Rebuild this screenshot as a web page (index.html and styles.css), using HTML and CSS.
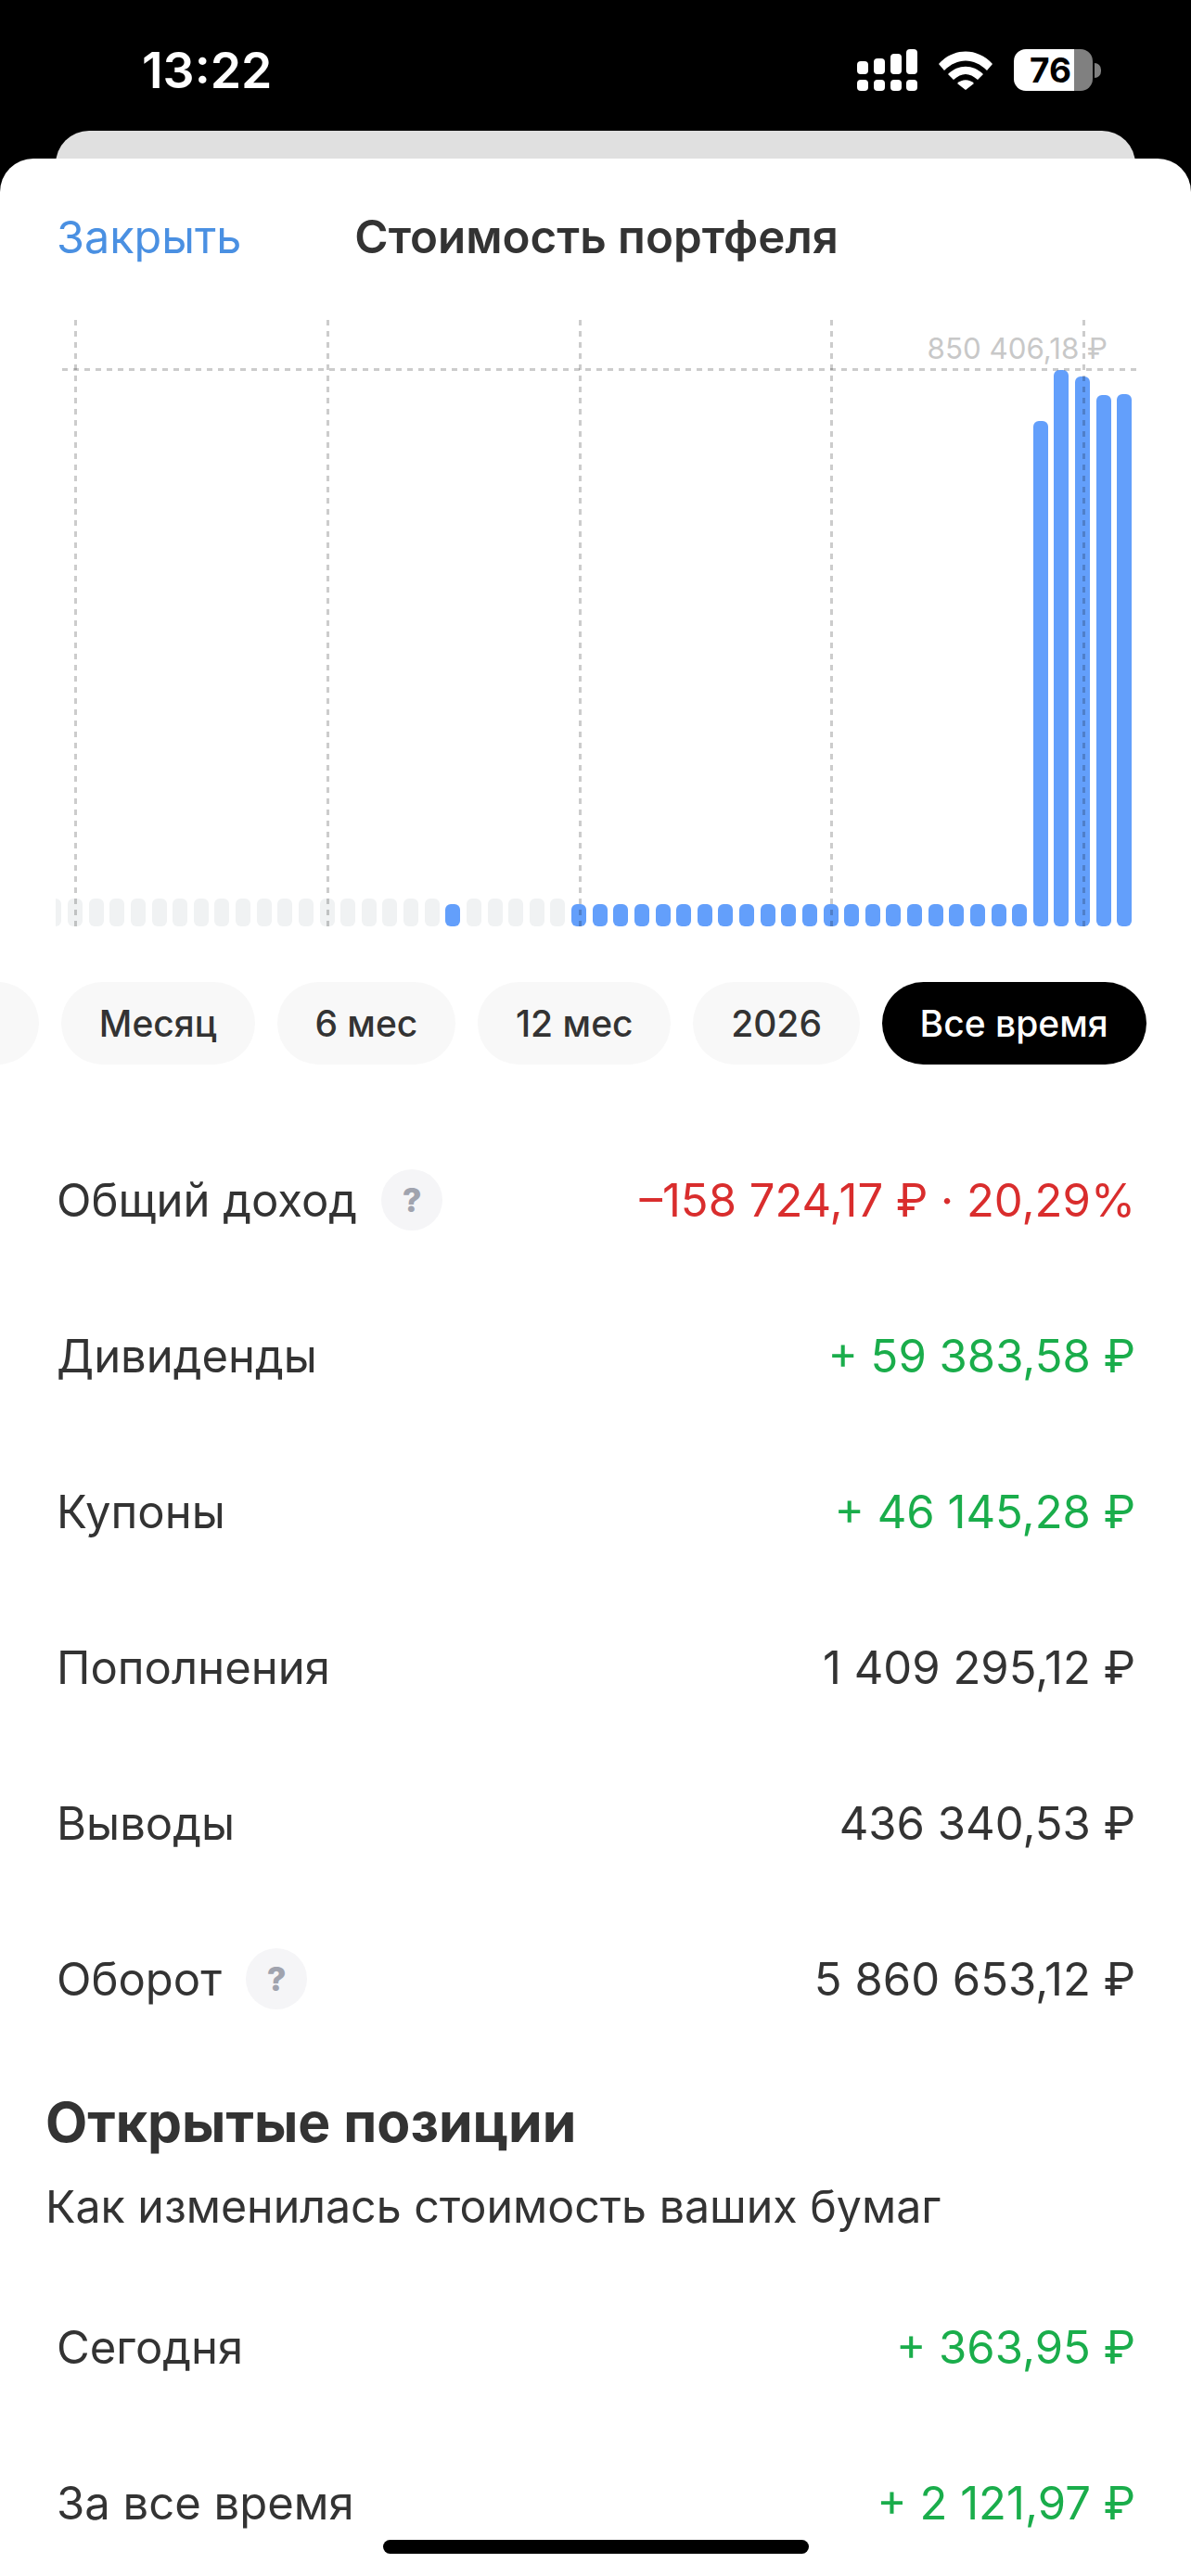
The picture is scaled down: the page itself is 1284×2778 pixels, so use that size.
FILE: index.html
```html
<!DOCTYPE html>
<html lang="ru">
<head>
    <meta charset="UTF-8">
    <title>Стоимость портфеля</title>
    <link rel="stylesheet" href="styles.css">
</head>
<body>
    <div class="status-bar">
        <span class="time">13:22</span>
        <div class="status-icons">
            <svg class="signal" width="65" height="45" viewBox="0 0 65 45" fill="#fff">
                <rect x="0" y="13" width="12" height="14" rx="4"/>
                <rect x="18" y="10" width="12" height="17" rx="4"/>
                <rect x="36" y="5" width="12" height="22" rx="4"/>
                <rect x="53" y="0" width="12" height="27" rx="4"/>
                <rect x="0" y="33" width="12" height="12" rx="4"/>
                <rect x="18" y="33" width="12" height="12" rx="4"/>
                <rect x="36" y="33" width="12" height="12" rx="4"/>
                <rect x="53" y="33" width="12" height="12" rx="4"/>
            </svg>
            <svg class="wifi" width="58" height="42" viewBox="0 0 58 42" fill="#fff">
                <path d="M0 14 C16 -4 42 -4 58 14 L52 21 C38 7 20 7 6 21 Z"/>
                <path d="M10 25 C21 14 37 14 48 25 L42 31 C33 23 25 23 16 31 Z"/>
                <path d="M20 35 C25 30 33 30 38 35 L29 42 Z"/>
            </svg>
            <div class="battery">
                <div class="battery-body"><span>76</span></div>
                <div class="battery-nub"></div>
            </div>
        </div>
    </div>

    <div class="back-card"></div>

    <main class="sheet">
        <header class="sheet-header">
            <a class="close-link">Закрыть</a>
            <h1 class="sheet-title">Стоимость портфеля</h1>
        </header>

        <section class="chart">
            <div class="bars" id="bars"></div>
            <div class="grid-lines">
                <div class="grid-v"></div>
                <div class="grid-v"></div>
                <div class="grid-v"></div>
                <div class="grid-v"></div>
                <div class="grid-v"></div>
            </div>
            <div class="grid-h"></div>
            <span class="max-label">850 406,18 ₽</span>
        </section>

        <nav class="periods">
            <span class="pill pill-cut"></span>
            <span class="pill">Месяц</span>
            <span class="pill">6 мес</span>
            <span class="pill">12 мес</span>
            <span class="pill">2026</span>
            <span class="pill pill-active">Все время</span>
        </nav>

        <section class="rows">
            <div class="row">
                <span class="row-label">Общий доход <i class="help">?</i></span>
                <span class="row-value red">–158 724,17 ₽ · 20,29%</span>
            </div>
            <div class="row">
                <span class="row-label">Дивиденды</span>
                <span class="row-value green">+ 59 383,58 ₽</span>
            </div>
            <div class="row">
                <span class="row-label">Купоны</span>
                <span class="row-value green">+ 46 145,28 ₽</span>
            </div>
            <div class="row">
                <span class="row-label">Пополнения</span>
                <span class="row-value">1 409 295,12 ₽</span>
            </div>
            <div class="row">
                <span class="row-label">Выводы</span>
                <span class="row-value">436 340,53 ₽</span>
            </div>
            <div class="row">
                <span class="row-label">Оборот <i class="help">?</i></span>
                <span class="row-value">5 860 653,12 ₽</span>
            </div>
        </section>

        <section class="positions">
            <h2 class="positions-title">Открытые позиции</h2>
            <p class="positions-sub">Как изменилась стоимость ваших бумаг</p>
        </section>

        <section class="rows rows-bottom">
            <div class="row">
                <span class="row-label">Сегодня</span>
                <span class="row-value green">+ 363,95 ₽</span>
            </div>
            <div class="row">
                <span class="row-label">За все время</span>
                <span class="row-value green">+ 2 121,97 ₽</span>
            </div>
        </section>
    </main>

    <div class="home-indicator"></div>

    <script>
        // столбики графика: 51 штука, первый обрезан слева
        var tall = { 46: 545, 47: 600, 48: 593, 49: 573, 50: 574 };
        var bars = document.getElementById('bars');
        for (var i = -1; i <= 50; i++) {
            var bar = document.createElement('div');
            var on = i === 18 || i >= 24;
            bar.className = 'bar' + (on ? ' bar-on' : '') + (i === -1 ? ' bar-cut' : '');
            bar.style.height = (tall[i] || (on ? 24 : 30)) + 'px';
            bars.appendChild(bar);
        }
    </script>
</body>
</html>
```

FILE: styles.css
```css
:root {
    --text-color: #333333;
    --blue: #4a90e2;
    --bar-blue: #639ffb;
    --bar-grey: #f0f2f3;
    --pill-grey: #f8f8f8;
    --grid-color: rgba(0, 0, 0, 0.2);
    --green: #1aad4b;
    --red: #d92d2d;
}

* {
    box-sizing: border-box;
}

body {
    margin: 0;
    width: 1284px;
    height: 2778px;
    overflow: hidden;
    position: relative;
    background-color: #000;
    font-family: Inter, "Liberation Sans", sans-serif;
    color: var(--text-color);
}

/* статус бар */
.status-bar {
    height: 141px;
    display: flex;
    justify-content: space-between;
    padding: 53px 97px 0 153px;
    color: #fff;
}

.time {
    font-size: 53.5px;
    font-weight: 600;
    line-height: 45px;
}

.status-icons {
    display: flex;
    align-items: flex-start;
}

.wifi {
    margin: 2px 23px 0 23px;
}

.battery {
    display: flex;
    align-items: center;
}

.battery-body {
    width: 85px;
    height: 45px;
    border-radius: 13px;
    background: linear-gradient(to right, #fff 65px, #808080 65px);
    color: #000;
    font-size: 37px;
    font-weight: 700;
    line-height: 45px;
    padding-left: 17px;
}

.battery-nub {
    width: 7px;
    height: 16px;
    margin-left: 2px;
    border-radius: 0 8px 8px 0;
    background-color: #808080;
}

.back-card {
    height: 60px;
    margin: 0 60px;
    background-color: #e0e0e0;
    border-radius: 36px 36px 0 0;
}

/* белый лист */
.sheet {
    height: 2607px;
    margin-top: -30px;
    position: relative;
    background-color: #fff;
    border-radius: 36px 36px 0 0;
}

.sheet-header {
    height: 174px;
    display: flex;
    align-items: center;
    padding: 0 61px 6px;
}

.close-link {
    color: var(--blue);
    font-size: 48.5px;
}

.sheet-title {
    margin: 0 0 0 122px;
    font-size: 49.3px;
    font-weight: 600;
}

/* график */
.chart {
    height: 654px;
    position: relative;
}

.grid-lines {
    position: absolute;
    top: 0;
    bottom: 0;
    left: 80px;
    width: 1090px;
    display: flex;
    justify-content: space-between;
}

.grid-v {
    width: 3px;
    background: repeating-linear-gradient(to bottom, var(--grid-color) 0, var(--grid-color) 6px, transparent 6px, transparent 12px);
}

.grid-h {
    position: absolute;
    top: 52px;
    left: 67px;
    right: 58px;
    height: 3px;
    background: repeating-linear-gradient(to right, var(--grid-color) 0, var(--grid-color) 6px, transparent 6px, transparent 12px);
}

.max-label {
    position: absolute;
    top: 12px;
    right: 90px;
    color: #c8c8c8;
    font-size: 31.3px;
    white-space: nowrap;
}

.bars {
    position: absolute;
    left: 60px;
    bottom: 0;
    display: flex;
    align-items: flex-end;
    gap: 6.64px;
}

.bar {
    width: 16px;
    flex: none;
    border-radius: 6px;
    background-color: var(--bar-grey);
}

.bar-on {
    background-color: var(--bar-blue);
}

.bar-cut {
    width: 6.4px;
    border-radius: 0 6px 6px 0;
}

/* периоды */
.periods {
    display: flex;
    gap: 24px;
    margin-top: 60px;
    margin-left: -164px;
}

.pill {
    height: 89px;
    flex: none;
    display: flex;
    align-items: center;
    padding: 0 40.8px;
    border-radius: 45px;
    background-color: var(--pill-grey);
    font-size: 39px;
    font-weight: 500;
}

.pill-cut {
    width: 206px;
}

.pill-active {
    background-color: #000;
    color: #fff;
}

/* строки */
.rows {
    padding: 62px 60px 0 61px;
}

.row {
    height: 168px;
    display: flex;
    justify-content: space-between;
    align-items: center;
    font-size: 49px;
}

.row-label {
    display: flex;
    align-items: center;
}

.help {
    width: 66px;
    height: 66px;
    margin-left: 26px;
    display: flex;
    justify-content: center;
    align-items: center;
    border-radius: 50%;
    background-color: #f5f5f7;
    color: #a0a3ae;
    font-size: 36px;
    font-style: normal;
    font-weight: 800;
}

.red {
    color: var(--red);
}

.green {
    color: var(--green);
}

/* открытые позиции */
.positions {
    padding: 36px 49px 0;
}

.positions-title {
    margin: 0;
    font-size: 58.8px;
    font-weight: 700;
    line-height: 70px;
}

.positions-sub {
    margin: 26px 0 0;
    font-size: 48.3px;
    line-height: 60px;
}

.rows-bottom {
    padding-top: 37px;
}

.home-indicator {
    position: absolute;
    left: 413px;
    bottom: 24px;
    width: 459px;
    height: 15px;
    border-radius: 8px;
    background-color: #000;
}
```
